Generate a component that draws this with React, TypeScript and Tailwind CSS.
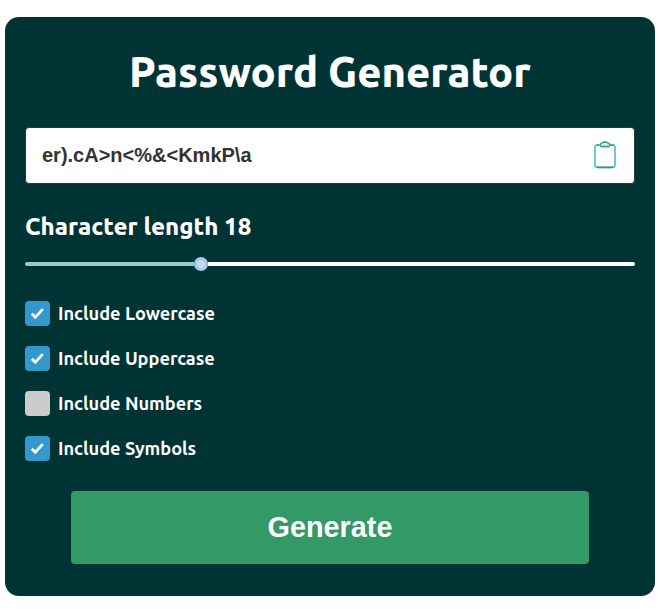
import { useState } from "react";

const options = ["Include Lowercase", "Include Uppercase", "Include Numbers", "Include Symbols"];

function ClipboardIcon() {
  return (
    <svg width="24" height="30" viewBox="0 0 24 30" fill="none">
      <path d="M5 27.500h14M7.500 6.500h9" stroke="#cccccc" strokeWidth="1" />
      <path d="M6.500 3.800H4.500A2.500 2.500 0 0 0 2 6.300v17.400A2.500 2.500 0 0 0 4.500 26.200h15a2.500 2.500 0 0 0 2.500-2.500V6.300A2.500 2.500 0 0 0 19.500 3.800h-2.500" stroke="#55c3bf" strokeWidth="1.700" />
      <path d="M4 26.400h16M3.500 4.100h3M17.500 4.100h3" stroke="#339980" strokeWidth="1.200" />
      <path d="M7.200 4C7.200 2.500 8.300 1.900 9.500 1.900c.5-.7 1.300-.9 2.500-.9s2 .2 2.500.9c1.300 0 2.300.6 2.300 2.100 0 .9-.6 1.400-1.500 1.400H8.700C7.800 5.400 7.200 4.900 7.200 4Z" fill="#e6e6e6" stroke="#339980" strokeWidth="1.300" />
    </svg>
  );
}

export default function App() {
  const [checked, setChecked] = useState([true, true, false, true]);
  const toggle = (i: number) => setChecked(checked.map((c, n) => (n === i ? !c : c)));

  return (
    <div className="h-[609px] bg-white px-[5px] pt-[17px] font-['Ubuntu','Noto_Sans',sans-serif] text-white">
      <main className="flex h-[579px] flex-col rounded-[14px] bg-[#003333] px-5">
        <h1 className="mt-[25px] h-[60px] text-center text-[41.6px] leading-[60px] font-extrabold whitespace-nowrap">
          Password Generator
        </h1>
        <div className="mt-[25px] flex h-[57px] items-center justify-between rounded-[4px] border border-[#333333] bg-white pr-[17px] pl-4">
          <span className="pb-[2px] font-['Liberation_Sans',Arial,sans-serif] text-[20px] font-bold text-[#333333]">{"er).cA>n<%&<KmkP\\a"}</span>
          <button aria-label="Copy"><ClipboardIcon /></button>
        </div>
        <h2 className="mt-[26px] h-[34px] text-[24px] leading-[34px] font-extrabold tracking-[0.02px] whitespace-nowrap">
          Character length 18
        </h2>
        <div className="mt-[12px] flex h-[16px] items-center">
          <div className="h-1 w-[169px] rounded-l-[2px] bg-[#99cccc]" />
          <div className="size-[14px] rounded-full border-[3px] border-[#99ccff] bg-[#d6d6d6]" />
          <div className="h-1 flex-1 rounded-r-[2px] bg-white" />
        </div>
        <div className="mt-[29px] flex flex-col gap-5">
          {options.map((label, i) => (
            <label key={label} className="flex h-[25px] items-center gap-2">
              <input type="checkbox" className="sr-only" checked={checked[i]} onChange={() => toggle(i)} />
              <span className={checked[i] ? "flex size-[25px] items-center justify-center rounded-[4px] bg-[#3399cc]" : "size-[25px] rounded-[4px] bg-[#cccccc]"}>
                {checked[i] && (
                  <svg width="15" height="13" viewBox="0 0 15 13" fill="none">
                    <path d="M1.800 6.700 5.300 10.200 12.800 2.200" stroke="white" strokeWidth="2.700" />
                  </svg>
                )}
              </span>
              <span className="text-[18.2px] leading-[25px] font-semibold whitespace-nowrap">{label}</span>
            </label>
          ))}
        </div>
        <button className="mt-[30px] h-[73px] w-[518px] self-center rounded-[4px] bg-[#339966] font-['Liberation_Sans',Arial,sans-serif] text-[28.8px] font-bold">
          Generate
        </button>
      </main>
    </div>
  );
}
